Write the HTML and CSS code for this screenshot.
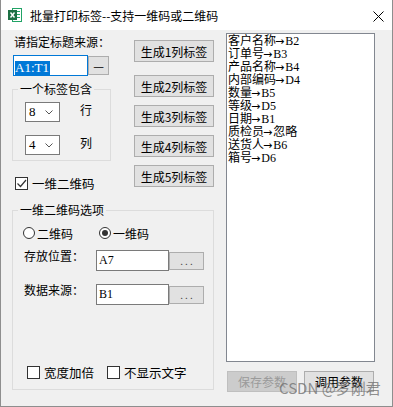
FILE: index.html
```html
<!DOCTYPE html>
<html>
<head>
    <title>批量打印标签</title>
    <link rel="stylesheet" href="styles.css">
</head>
<body>
    <div class="window">
        <div class="titlebar">
            <svg class="app-icon" width="14" height="16" viewBox="0 0 14 16">
                <rect x="4.5" y="1.5" width="9" height="13" fill="#fff" stroke="#21a366"/>
                <path d="M9 4.5h3M9 7.5h3M9 10.5h3" stroke="#21a366"/>
                <rect x="0" y="3" width="9" height="10" fill="#1d7044"/>
                <path d="M2.5 5.5l4 5M6.5 5.5l-4 5" stroke="#fff" stroke-width="1.4"/>
            </svg>
            <span class="title">批量打印标签--支持一维码或二维码</span>
            <svg class="close" width="11" height="11" viewBox="0 0 11 11">
                <path d="M0.5 0.5l10 10M10.5 0.5l-10 10" stroke="#000" stroke-width="1"/>
            </svg>
        </div>
        <div class="client">
            <div class="left-pane">
                <div class="top-area">
                    <div class="source-col">
                        <div class="label">请指定标题来源：</div>
                        <div class="range-row">
                            <div class="range-input"><span class="sel">A1:T1</span></div>
                            <button class="pick">—</button>
                        </div>
                        <fieldset class="group group-size">
                            <legend>一个标签包含</legend>
                            <div class="group-body size-body">
                                <div class="count-row">
                                    <div class="combo"><span>8</span>
                                        <svg width="8" height="5" viewBox="0 0 8 5"><path d="M0.5 0.5l3.5 3.5l3.5-3.5" fill="none" stroke="#555"/></svg>
                                    </div>
                                    <span class="unit">行</span>
                                </div>
                                <div class="count-row">
                                    <div class="combo"><span>4</span>
                                        <svg width="8" height="5" viewBox="0 0 8 5"><path d="M0.5 0.5l3.5 3.5l3.5-3.5" fill="none" stroke="#555"/></svg>
                                    </div>
                                    <span class="unit">列</span>
                                </div>
                            </div>
                        </fieldset>
                        <div class="check code-check">
                            <span class="box">
                                <svg width="11" height="11" viewBox="0 0 11 11"><path d="M1.5 5.5l3 3l5.5-6.5" fill="none" stroke="#333" stroke-width="1.2"/></svg>
                            </span>
                            <span>一维二维码</span>
                        </div>
                    </div>
                    <div class="gen-col">
                        <button class="btn gen-btn">生成1列标签</button>
                        <button class="btn gen-btn">生成2列标签</button>
                        <button class="btn gen-btn">生成3列标签</button>
                        <button class="btn gen-btn">生成4列标签</button>
                        <button class="btn gen-btn">生成5列标签</button>
                    </div>
                </div>
                <fieldset class="group group-code">
                    <legend>一维二维码选项</legend>
                    <div class="group-body code-body">
                        <div class="radio-row">
                            <div class="radio"><span class="dot"></span><span>二维码</span></div>
                            <div class="radio"><span class="dot on"></span><span>一维码</span></div>
                        </div>
                        <div class="field-row">
                            <span class="field-label">存放位置：</span>
                            <div class="field-input">A7</div>
                            <button class="dots">...</button>
                        </div>
                        <div class="field-row second">
                            <span class="field-label">数据来源：</span>
                            <div class="field-input">B1</div>
                            <button class="dots">...</button>
                        </div>
                        <div class="option-row">
                            <div class="check wide"><span class="box"></span><span>宽度加倍</span></div>
                            <div class="check"><span class="box"></span><span>不显示文字</span></div>
                        </div>
                    </div>
                </fieldset>
            </div>
            <div class="right-pane">
                <div class="listbox">
                    <div>客户名称<span class="arr">→</span>B2</div>
                    <div>订单号<span class="arr">→</span>B3</div>
                    <div>产品名称<span class="arr">→</span>B4</div>
                    <div>内部编码<span class="arr">→</span>D4</div>
                    <div>数量<span class="arr">→</span>B5</div>
                    <div>等级<span class="arr">→</span>D5</div>
                    <div>日期<span class="arr">→</span>B1</div>
                    <div>质检员<span class="arr">→</span>忽略</div>
                    <div>送货人<span class="arr">→</span>B6</div>
                    <div>箱号<span class="arr">→</span>D6</div>
                </div>
                <div class="bottom-buttons">
                    <button class="btn bottom-btn" disabled>保存参数</button>
                    <button class="btn bottom-btn">调用参数</button>
                </div>
            </div>
        </div>
        <div class="watermark">CSDN @罗刚君</div>
    </div>
</body>
</html>
```

FILE: styles.css
```css
body {
    margin: 0;
    font-family: "Noto Sans CJK SC", sans-serif;
    font-size: 12px;
    color: #000;
}
.window {
    width: 393px;
    height: 407px;
    box-sizing: border-box;
    border: 1px solid #8e8e8e;
    border-top: 0;
    background: #f0f0f0;
    position: relative;
    display: flex;
    flex-direction: column;
}
.titlebar {
    height: 30px;
    background: #fff;
    display: flex;
    align-items: center;
    flex-shrink: 0;
}
.app-icon {
    margin-left: 7px;
}
.title {
    margin-left: 8px;
    padding-top: 1px;
    line-height: 14px;
}
.close {
    margin-left: auto;
    margin-right: 8px;
    margin-top: 2px;
}
.client {
    display: flex;
    flex: 1;
}
.left-pane {
    margin-left: 11px;
    width: 202px;
}
.top-area {
    display: flex;
    height: 160px;
}
.source-col {
    width: 99px;
}
.label {
    margin-top: 5px;
    padding-left: 2px;
    line-height: 14px;
}
.range-row {
    display: flex;
    margin-top: 6px;
}
.range-input {
    margin-left: 1px;
    width: 75px;
    height: 21px;
    box-sizing: border-box;
    border: 1px solid #0078d7;
    background: #fff;
    padding: 2px 0 0 1px;
}
.sel {
    display: inline-block;
    background: #0078d7;
    color: #fff;
    font-family: "Liberation Serif", serif;
    font-size: 13px;
    line-height: 14px;
    padding-right: 1px;
}
button {
    font-family: "Noto Sans CJK SC", sans-serif;
    font-size: 12px;
    color: #000;
    padding: 0;
    margin: 0;
    box-sizing: border-box;
}
.pick {
    width: 21px;
    height: 19px;
    margin-top: 1px;
    background: #e1e1e1;
    border: 1px solid #adadad;
    line-height: 16px;
}
.group {
    margin: 0;
    padding: 0;
    border: 1px solid #dcdcdc;
    min-width: 0;
    box-sizing: border-box;
}
.group legend {
    margin-left: 5px;
    padding: 0 2px;
    line-height: 12px;
}
.group-size {
    margin-top: 7px;
    width: 99px;
}
.size-body {
    padding: 7px 0 5px 12px;
}
.count-row {
    display: flex;
    align-items: center;
    height: 20px;
}
.count-row + .count-row {
    margin-top: 13px;
}
.combo {
    width: 35px;
    height: 20px;
    box-sizing: border-box;
    border: 1px solid #7a7a7a;
    background: #fff;
    display: flex;
    align-items: center;
    justify-content: space-between;
    padding: 0 6px 0 3px;
    font-family: "Liberation Serif", serif;
    font-size: 13px;
}
.unit {
    margin-left: 20px;
    margin-top: -6px;
}
.check {
    display: flex;
    align-items: center;
    height: 14px;
}
.check .box {
    width: 13px;
    height: 13px;
    box-sizing: border-box;
    border: 1px solid #333;
    background: #fff;
    margin-right: 4px;
    display: flex;
    align-items: center;
    justify-content: center;
}
.code-check {
    margin-top: 15px;
    margin-left: 3px;
    font-size: 12.5px;
}
.gen-col {
    margin-left: 23px;
    display: flex;
    flex-direction: column;
}
.btn {
    background: #e1e1e1;
    border: 1px solid #adadad;
}
.gen-btn {
    width: 80px;
    height: 22px;
    margin-top: 8px;
}
.gen-btn:first-child {
    margin-top: 10px;
}
.gen-btn:nth-child(2) {
    margin-top: 13px;
}
.group-code {
    margin-top: 14px;
    width: 202px;
}
.code-body {
    padding: 11px 0 10px 10px;
}
.radio-row {
    display: flex;
    height: 12px;
    align-items: center;
}
.radio {
    display: flex;
    align-items: center;
    width: 76px;
}
.dot {
    width: 12px;
    height: 12px;
    box-sizing: border-box;
    border: 1px solid #333;
    border-radius: 50%;
    background: #fff;
    margin-right: 2px;
    display: flex;
    align-items: center;
    justify-content: center;
}
.dot.on::after {
    content: "";
    width: 6px;
    height: 6px;
    border-radius: 50%;
    background: #333;
}
.field-row {
    display: flex;
    margin-top: 11px;
    height: 21px;
}
.field-row.second {
    margin-top: 13px;
}
.field-label {
    width: 72px;
    margin-left: 1px;
    margin-top: -1px;
    line-height: 14px;
}
.field-input {
    width: 73px;
    height: 21px;
    box-sizing: border-box;
    border: 1px solid #7a7a7a;
    background: #fff;
    padding-left: 2px;
    line-height: 19px;
    font-family: "Liberation Serif", serif;
    font-size: 12px;
}
.dots {
    width: 35px;
    height: 18px;
    margin-top: 2px;
    background: #e1e1e1;
    border: 1px solid #adadad;
    color: #444;
    font-size: 10px;
    letter-spacing: 2px;
    line-height: 12px;
    padding-left: 2px;
}
.option-row {
    display: flex;
    margin-top: 61px;
    padding-left: 4px;
    height: 13px;
    align-items: center;
}
.option-row .check {
    font-size: 12.5px;
}
.option-row .wide {
    width: 80px;
}
.right-pane {
    margin-left: 12px;
    width: 149px;
}
.listbox {
    margin-top: 3px;
    height: 329px;
    box-sizing: border-box;
    border: 1px solid #828790;
    background: #fff;
    padding: 1px 0 0 1px;
    font-family: "Liberation Serif", "Noto Sans CJK SC", serif;
    font-size: 12px;
    line-height: 12px;
}
.arr {
    font-family: "DejaVu Sans", sans-serif;
    font-size: 11px;
    margin: 0 1px 0 -1px;
}
.bottom-buttons {
    display: flex;
    margin-top: 9px;
}
.bottom-btn {
    width: 70px;
    height: 21px;
    margin-left: 1px;
}
.bottom-btn + .bottom-btn {
    margin-left: 7px;
}
.bottom-btn:disabled {
    background: #cccccc;
    border-color: #bfbfbf;
    color: #9a9a9a;
}
.watermark {
    position: absolute;
    left: 278px;
    top: 379px;
    font-size: 15px;
    line-height: 18px;
    color: rgba(110, 110, 110, 0.75);
    font-family: "Noto Sans CJK SC", sans-serif;
}
```
